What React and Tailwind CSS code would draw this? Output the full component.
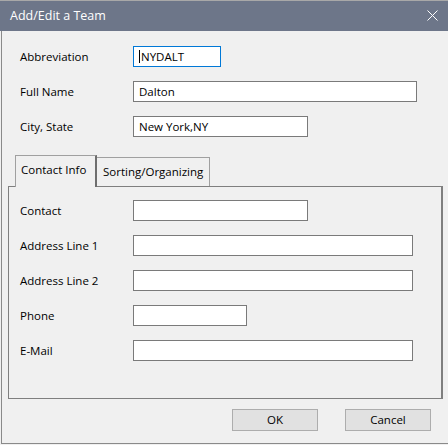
import React from 'react'

function Field({ label, width, value, focused }) {
  return (
    <div className="flex items-center h-[21px]">
      <span className="w-[113px] text-[11.5px] text-black">{label}</span>
      <div
        className={`h-[21px] bg-white border flex items-center pl-[5px] text-[11.5px] text-black ${
          focused ? 'border-[#0078d7]' : 'border-[#7a7a7a]'
        }`}
        style={{ width }}
      >
        {focused && <span className="w-px h-[13px] bg-black mr-px" />}
        {value}
      </div>
    </div>
  )
}

export default function App() {
  return (
    <div className="w-[448px] h-[445px] bg-[#f0f0f0] font-['Open_Sans','Noto_Sans',sans-serif] flex flex-col">
      <div className="h-px bg-[#a8a8a8]" />
      <div className="h-[30px] bg-[#6d7689] flex items-center justify-between pl-[10px] pr-[10px]">
        <span className="text-white text-[12.5px]">Add/Edit a Team</span>
        <svg width="11" height="11" viewBox="0 0 11 11" className="mb-px">
          <path d="M0.5 0.5 L10.5 10.5 M10.5 0.5 L0.5 10.5" stroke="white" strokeWidth="1" />
        </svg>
      </div>

      <div className="flex-1 flex flex-col border-l border-b border-[#8a8a8a] ml-px mb-px">
        <div className="flex flex-col gap-[14px] pt-[15px] pl-[18px]">
          <Field label="Abbreviation" width={88} value="NYDALT" focused />
          <Field label="Full Name" width={284} value="Dalton" />
          <Field label="City, State" width={175} value="New York,NY" />
        </div>

        <div className="flex items-end pl-[13px] mt-[18px] h-[31px]">
          <div className="relative z-10 -mb-px h-[32px] w-[82px] bg-[#f0f0f0] border-l border-t border-[#a0a0a0] border-r-2 border-r-[#6e6e6e] flex items-start pl-[5px] pt-[5px] text-[11.5px] text-black">
            Contact Info
          </div>
          <div className="h-[29px] w-[113px] border-t border-r border-[#a0a0a0] bg-[#f0f0f0] flex items-center pl-[6px] text-[11.5px] text-black">
            Sorting/Organizing
          </div>
        </div>

        <div className="ml-[6px] w-[435px] h-[213px] border border-[#7f7f7f] border-r-2 flex flex-col gap-[14px] pt-[13px] pl-[11px]">
          <Field label="Contact" width={175} value="" />
          <Field label="Address Line 1" width={280} value="" />
          <Field label="Address Line 2" width={280} value="" />
          <Field label="Phone" width={114} value="" />
          <Field label="E-Mail" width={280} value="" />
        </div>

        <div className="flex justify-end gap-[27px] pr-[17px] pt-[10px]">
          <button className="w-[86px] h-[22px] bg-[#e1e1e1] border border-[#adadad] text-[11.5px] text-black">OK</button>
          <button className="w-[86px] h-[22px] bg-[#e1e1e1] border border-[#adadad] text-[11.5px] text-black">Cancel</button>
        </div>
      </div>
    </div>
  )
}
